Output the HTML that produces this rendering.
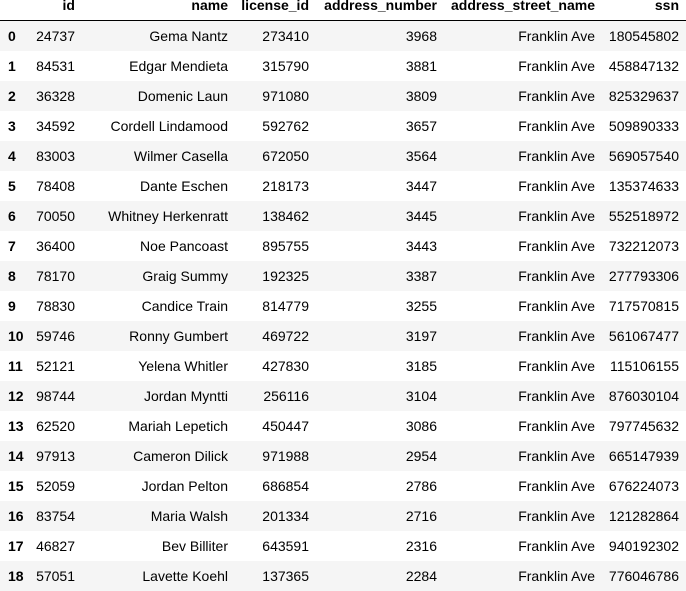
<!DOCTYPE html>
<html><head><style>
body{margin:0;width:686px;height:582px;overflow:hidden;background:#fff;font-family:"Liberation Sans",Arial,sans-serif;font-size:14px;color:#000}
.r{position:absolute;left:0;width:686px;height:30px;line-height:30px}
.r.g{background:#f5f5f5}
.r span{position:absolute;white-space:nowrap}
.i{left:8px;font-weight:bold}
.c1{right:611px}.c2{right:458px}.c3{right:377px}.c4{right:249px}.c5{right:91px}.c6{right:7px}
.h{top:-10px;font-weight:bold}
.line{position:absolute;left:0;top:20px;width:686px;height:1px;background:#000}
</style></head><body>
<div class="r h"><span class="c1">id</span><span class="c2">name</span><span class="c3">license_id</span><span class="c4">address_number</span><span class="c5">address_street_name</span><span class="c6">ssn</span></div>
<div class="line"></div>
<div id="t"></div>
<script>
var d=[["24737","Gema Nantz","273410","3968","180545802"],["84531","Edgar Mendieta","315790","3881","458847132"],["36328","Domenic Laun","971080","3809","825329637"],["34592","Cordell Lindamood","592762","3657","509890333"],["83003","Wilmer Casella","672050","3564","569057540"],["78408","Dante Eschen","218173","3447","135374633"],["70050","Whitney Herkenratt","138462","3445","552518972"],["36400","Noe Pancoast","895755","3443","732212073"],["78170","Graig Summy","192325","3387","277793306"],["78830","Candice Train","814779","3255","717570815"],["59746","Ronny Gumbert","469722","3197","561067477"],["52121","Yelena Whitler","427830","3185","115106155"],["98744","Jordan Myntti","256116","3104","876030104"],["62520","Mariah Lepetich","450447","3086","797745632"],["97913","Cameron Dilick","971988","2954","665147939"],["52059","Jordan Pelton","686854","2786","676224073"],["83754","Maria Walsh","201334","2716","121282864"],["46827","Bev Billiter","643591","2316","940192302"],["57051","Lavette Koehl","137365","2284","776046786"]];
var h="";d.forEach(function(r,n){h+='<div class="r'+(n%2==0?' g':'')+'" style="top:'+(21+30*n)+'px"><span class="i">'+n+'</span><span class="c1">'+r[0]+'</span><span class="c2">'+r[1]+'</span><span class="c3">'+r[2]+'</span><span class="c4">'+r[3]+'</span><span class="c5">Franklin Ave</span><span class="c6">'+r[4]+'</span></div>';});
document.getElementById("t").innerHTML=h;
</script>
</body></html>
